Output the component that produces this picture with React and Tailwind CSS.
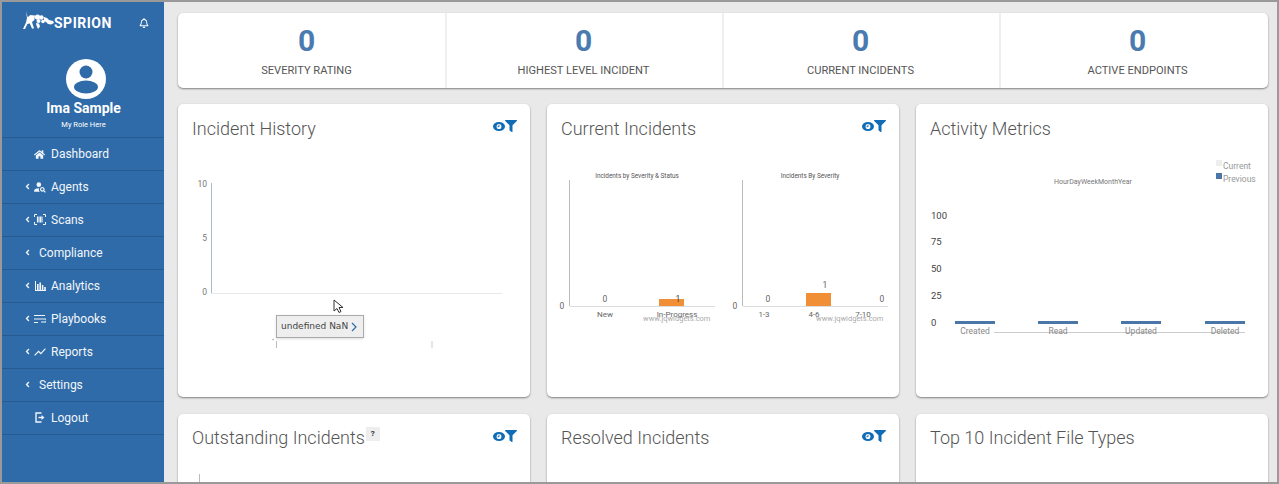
import { FaHome, FaAngleLeft, FaFilter, FaRegBell } from "react-icons/fa";
import { MdPersonSearch, MdShowChart } from "react-icons/md";

const ScanIcon = () => (
  <svg width="12" height="11" viewBox="0 0 12 11" fill="none" stroke="currentColor" strokeWidth="1">
    <path d="M.5 3V.5H3M9 .5h2.5V3M.5 8v2.5H3M9 10.5h2.5V8" />
    <path d="M3.5 2.5v6M5 2.5v6M6.5 2.5v6M8 2.5v6" strokeWidth="1.1" />
  </svg>
);

const BarsIcon = () => (
  <svg width="11" height="10" viewBox="0 0 11 10" fill="currentColor">
    <rect x="0" y="0" width="1" height="10" />
    <rect x="0" y="9" width="11" height="1" />
    <rect x="2" y="3" width="1.6" height="6" />
    <rect x="4.4" y="1.5" width="1.6" height="7.5" />
    <rect x="6.8" y="4" width="1.6" height="5" />
    <rect x="9.2" y="6" width="1.6" height="3" />
  </svg>
);

const PlaybookIcon = () => (
  <svg width="12" height="10" viewBox="0 0 12 10" fill="none" stroke="currentColor" strokeWidth="1.2">
    <path d="M0 1.5h11M0 5h11a1.5 1.5 0 0 1 0 3H7M0 8.5h4" />
  </svg>
);

const LogoutIcon = () => (
  <svg width="10" height="11" viewBox="0 0 10 11" fill="none" stroke="currentColor" strokeWidth="1.4">
    <path d="M6.5 1H1v9h5.5" />
    <path d="M3.5 5.5H7" />
    <path d="M6.5 3v5l3-2.5z" fill="currentColor" stroke="none" />
  </svg>
);

const Logo = () => (
  <svg width="31" height="20" viewBox="0 0 31 20" fill="white" className="mb-[5px] -ml-[1px]">
    <path d="M3 0l1.6 6 2.4-1-.6 2-1 4-3.4 7H0l3-6.5L4 7z" />
    <path d="M7 4l5 .5-.6 4.5-2.4 2 2 6.5h-2l-2.2-5-3 .5 1-5z" />
    <circle cx="14.5" cy="6" r="2.6" />
    <circle cx="18.5" cy="6.5" r="2.2" />
    <circle cx="15.5" cy="10" r="2" />
    <circle cx="20" cy="10.5" r="1.8" />
    <path d="M21 6l3 1 2 2 4 1 1 2-3 1.5-3-.5-2-2-2-1z" />
    <path d="M13 12l3 .5 1 3-2 2.5-1.5-3.5z" />
  </svg>
);

const menu = [
  { label: "Agents", icon: <MdPersonSearch size={14} />, arrow: true },
  { label: "Scans", icon: <ScanIcon />, arrow: true },
  { label: "Compliance", arrow: true },
  { label: "Analytics", icon: <BarsIcon />, arrow: true },
  { label: "Playbooks", icon: <PlaybookIcon />, arrow: true },
  { label: "Reports", icon: <MdShowChart size={14} />, arrow: true },
  { label: "Settings", arrow: true },
  { label: "Logout", icon: <LogoutIcon /> },
];

function MenuRow({ label, icon, arrow }) {
  return (
    <div className="h-[33px] flex items-center border-b border-[#255a92] text-[12px] text-[#f2f6fa] pl-[21px] pb-[1px]">
      <span className="w-[9px] flex justify-center">{arrow && <FaAngleLeft size={9} />}</span>
      {icon ? (
        <>
          <span className="w-[14px] ml-[1px] flex justify-center">{icon}</span>
          <span className="ml-[4px]">{label}</span>
        </>
      ) : (
        <span className="ml-[7px]">{label}</span>
      )}
    </div>
  );
}

function Sidebar() {
  return (
    <aside className="w-[162px] shrink-0 bg-[#2f6ba8] text-white">
      <div className="h-[42px] flex items-center pl-[22px]">
        <Logo />
        <span className="text-[14px] font-bold tracking-[0.5px]">SPIRION</span>
        <FaRegBell size={10} className="ml-[27px]" />
      </div>
      <div className="h-[94px] flex flex-col items-center border-b border-[#255a92] pl-[1px]">
        <svg width="40" height="40" viewBox="0 0 40 40" className="mt-[15px] ml-[5px]">
          <circle cx="20" cy="20" r="20" fill="white" />
          <circle cx="20" cy="13" r="6.5" fill="#2f6ba8" />
          <ellipse cx="20" cy="28" rx="12" ry="6.5" fill="#2f6ba8" />
        </svg>
        <p className="-mt-[1px] text-[14px] leading-[20px] font-bold">Ima Sample</p>
        <p className="mt-[2px] text-[7.5px] leading-[10px]">My Role Here</p>
      </div>
      <div className="h-[33px] flex items-center border-b border-[#255a92] text-[12px] text-[#f2f6fa] pl-[32px]">
        <FaHome size={11} />
        <span className="ml-[6px]">Dashboard</span>
      </div>
      {menu.map((item) => (
        <MenuRow key={item.label} {...item} />
      ))}
    </aside>
  );
}

function Stat({ label, className }) {
  return (
    <div className={`h-full flex flex-col items-center ${className}`}>
      <span className="mt-[10px] text-[30px] leading-[36px] font-bold text-[#4a7bb0]">0</span>
      <span className="mt-[5px] text-[11.1px] leading-[14px] text-[#555]">{label}</span>
    </div>
  );
}

const ViewIcons = () => (
  <div className="flex items-center text-[#0f6cb5]">
    <svg width="12" height="9" viewBox="0 0 13 9" preserveAspectRatio="none">
      <ellipse cx="6.5" cy="4.5" rx="6.5" ry="4.5" fill="currentColor" />
      <circle cx="6.5" cy="4.5" r="2.6" fill="white" />
      <path d="M6.5 2.8v1.9h-1.6" stroke="currentColor" strokeWidth="1" fill="none" />
    </svg>
    <FaFilter size={12} />
  </div>
);

function Card({ title, icons, badge, height, compact, children }) {
  return (
    <div className={`relative bg-white rounded-[5px] shadow-[0_1px_2px_rgba(0,0,0,0.45)] ${height}`}>
      <div className={`flex items-start justify-between pl-[14px] pr-[13px] h-[50px] ${compact ? "pt-[13px]" : "pt-[14px]"}`}>
        <div className="flex items-start">
          <h2 className="text-[18px] leading-[22px] font-light text-[#555]">{title}</h2>
          {badge && (
            <span className="ml-[1px] w-[14px] h-[14px] bg-[#eee] text-[#333] text-[8px] font-bold flex items-center justify-center">?</span>
          )}
        </div>
        {icons && <div className={compact ? "mt-[3px]" : "mt-[2px]"}><ViewIcons /></div>}
      </div>
      {children}
    </div>
  );
}

function HistoryChart() {
  return (
    <svg viewBox="178 154 352 243" className="w-[352px] h-[243px]">
      <line x1="211.5" y1="183" x2="211.5" y2="294" stroke="#a9bcc9" />
      <line x1="211" y1="293.5" x2="502" y2="293.5" stroke="#e8e8e8" />
      <g fontSize="8.5" fill="#777" textAnchor="end">
        <text x="207" y="187">10</text>
        <text x="207" y="241">5</text>
        <text x="207" y="295">0</text>
      </g>
      <line x1="276.5" y1="341" x2="276.5" y2="348" stroke="#bbb" />
      <line x1="432" y1="341" x2="432" y2="348" stroke="#ddd" strokeWidth="1.5" />
      <text x="272" y="343" fontSize="6" fill="#666">"</text>
    </svg>
  );
}

function CurrentChart() {
  return (
    <svg viewBox="547 154 352 243" className="w-[352px] h-[243px]">
      <g fontSize="6.4" fill="#555" textAnchor="middle">
        <text x="637" y="178">Incidents by Severity &amp; Status</text>
        <text x="810" y="178">Incidents By Severity</text>
      </g>
      <g stroke="#bbb">
        <line x1="569.5" y1="180" x2="569.5" y2="306" />
        <line x1="742.5" y1="180" x2="742.5" y2="306" />
      </g>
      <g stroke="#ddd">
        <line x1="570" y1="306.5" x2="715" y2="306.5" />
        <line x1="743" y1="306.5" x2="888" y2="306.5" />
      </g>
      <rect x="659" y="299" width="25" height="7" fill="#f08f36" />
      <rect x="806" y="293" width="25" height="13" fill="#f08f36" />
      <g fontSize="8.5" fill="#666" textAnchor="middle">
        <text x="562" y="309">0</text>
        <text x="605" y="302">0</text>
        <text x="678" y="302" fill="#444">1</text>
        <text x="735" y="309">0</text>
        <text x="768" y="302">0</text>
        <text x="825" y="288">1</text>
        <text x="882" y="302">0</text>
      </g>
      <g fontSize="8" fill="#666" textAnchor="middle">
        <text x="605" y="317">New</text>
        <text x="677" y="317">In-Progress</text>
        <text x="764" y="317">1-3</text>
        <text x="814" y="317">4-6</text>
        <text x="863" y="317">7-10</text>
      </g>
      <g fontSize="7.5" fill="#aaa">
        <text x="643" y="321">www.jqwidgets.com</text>
        <text x="816" y="321">www.jqwidgets.com</text>
      </g>
    </svg>
  );
}

function MetricsChart() {
  const bars = [
    { x: 955, label: "Created" },
    { x: 1038, label: "Read" },
    { x: 1121, label: "Updated" },
    { x: 1205, label: "Deleted" },
  ];
  const ticks = [
    { y: 219, label: "100" },
    { y: 245, label: "75" },
    { y: 272, label: "50" },
    { y: 299, label: "25" },
    { y: 326, label: "0" },
  ];
  return (
    <svg viewBox="916 154 352 243" className="w-[352px] h-[243px]">
      <rect x="1216" y="160" width="6" height="6" fill="#eee" />
      <rect x="1216" y="173" width="6" height="6" fill="#4a76a8" />
      <g fontSize="8.5" fill="#999">
        <text x="1223" y="169">Current</text>
        <text x="1223" y="182">Previous</text>
      </g>
      <text x="1093" y="183.5" fontSize="7" fill="#777" textAnchor="middle">HourDayWeekMonthYear</text>
      {ticks.map((t) => (
        <text key={t.label} x="931" y={t.y} fontSize="9.5" fill="#444">{t.label}</text>
      ))}
      <line x1="994" y1="332.5" x2="1245" y2="332.5" stroke="#ccc" />
      {bars.map((b) => (
        <g key={b.label}>
          <rect x={b.x} y="321" width="40" height="3" fill="#4a76a8" />
          <text x={b.x + 20} y="334" fontSize="8.5" fill="#888" textAnchor="middle">{b.label}</text>
        </g>
      ))}
    </svg>
  );
}

export default function App() {
  return (
    <div className="w-screen h-screen overflow-hidden flex border-2 border-[#9a9a9a] bg-[#e9e9e9] font-['Roboto',sans-serif]">
      <Sidebar />
      <main className="flex-1 min-w-0 pl-[14px] pr-[9px] pt-[11px]">
        <div className="flex items-center h-[75px] bg-white rounded-[5px] shadow-[0_1px_2px_rgba(0,0,0,0.45)]">
          <Stat label="SEVERITY RATING" className="w-[269px] pr-[10px] border-r-2 border-[#efefef]" />
          <Stat label="HIGHEST LEVEL INCIDENT" className="w-[277px] pr-[2px] border-r-2 border-[#efefef]" />
          <Stat label="CURRENT INCIDENTS" className="w-[277px] pr-[2px] border-r-2 border-[#efefef]" />
          <Stat label="ACTIVE ENDPOINTS" className="flex-1 pl-[6px]" />
        </div>
        <div className="mt-[16px] grid grid-cols-3 gap-[17px]">
          <Card title="Incident History" icons height="h-[293px]">
            <HistoryChart />
            <div className="absolute left-[98px] top-[211px] h-[23px] w-[88px] bg-[#eee] border border-[#aaa] flex items-center pl-[4px] text-[9px] whitespace-nowrap text-[#444] font-['DejaVu_Sans',sans-serif] shadow-sm">
              undefined NaN
              <svg width="7" height="10" viewBox="0 0 7 10" className="ml-[3px]" fill="none" stroke="#2f6ba8" strokeWidth="1.2">
                <path d="M1 1l4 4-4 4" />
              </svg>
            </div>
            <svg width="11" height="15" viewBox="0 0 11 15" className="absolute left-[155px] top-[195px]">
              <path d="M1 1v11l3-2.5 2 4 2-1-2-4h4z" fill="white" stroke="#333" />
            </svg>
          </Card>
          <Card title="Current Incidents" icons height="h-[293px]">
            <CurrentChart />
          </Card>
          <Card title="Activity Metrics" height="h-[293px]">
            <MetricsChart />
          </Card>
          <Card title="Outstanding Incidents" icons badge compact height="h-[200px]">
            <div className="ml-[21px] mt-[10px] w-px h-[40px] bg-[#bbb]" />
          </Card>
          <Card title="Resolved Incidents" icons compact height="h-[200px]" />
          <Card title="Top 10 Incident File Types" compact height="h-[200px]" />
        </div>
      </main>
    </div>
  );
}
